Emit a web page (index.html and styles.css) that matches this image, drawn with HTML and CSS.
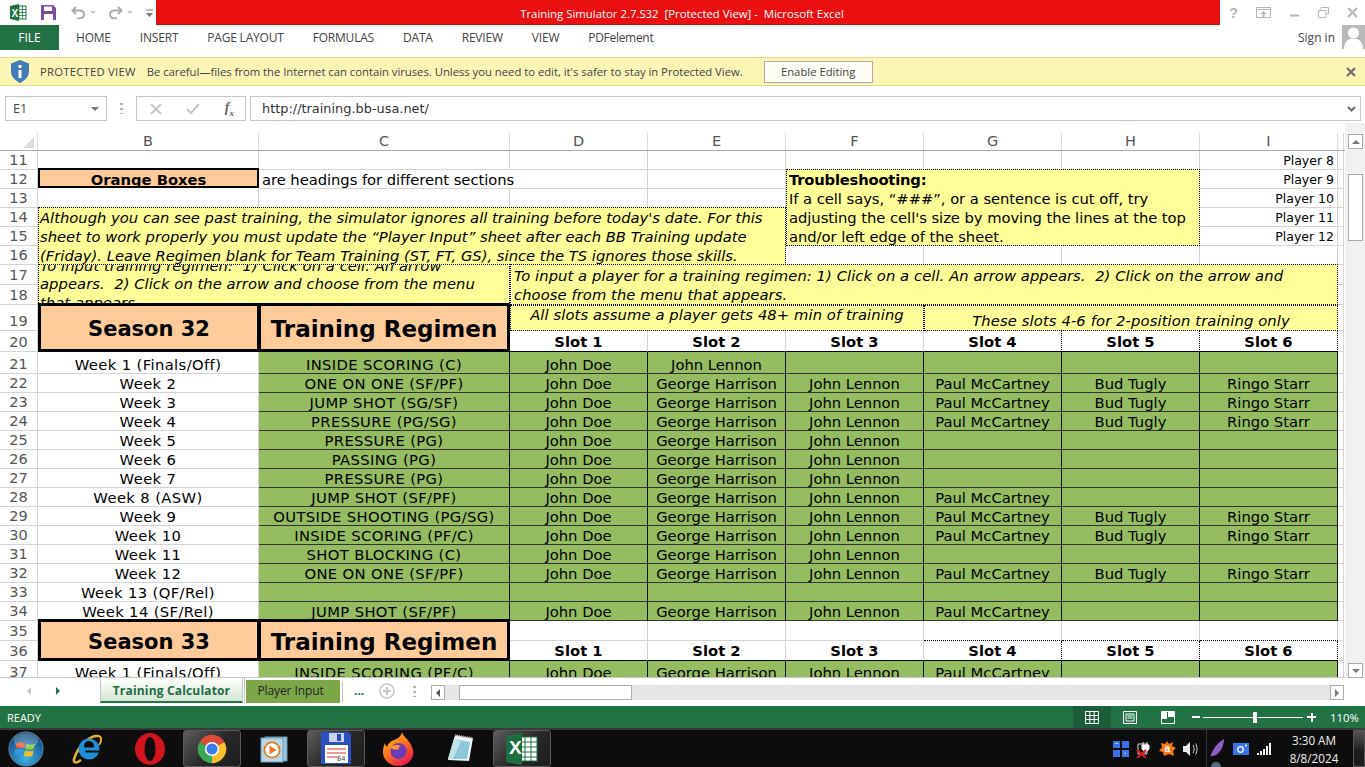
FILE: index.html
```html
<!DOCTYPE html>
<html lang="en">
<head>
    <meta charset="UTF-8">
    <title>Training Simulator 2.7.S32 [Protected View] - Microsoft Excel</title>
    <link rel="stylesheet" href="styles.css">
</head>
<body>

<!-- title bar -->
<div class="titlebar">
    <div class="qat">
        <svg class="qat-xl" width="17" height="17" viewBox="0 0 17 17"><rect x="6" y="2" width="10" height="13" fill="#fff" stroke="#217346"/><path d="M9 2v13M12.500 2v13M6 5.500h10M6 8.500h10M6 11.500h10" stroke="#217346" stroke-width=".8"/><path d="M0 2l9-2v17l-9-2z" fill="#217346"/><text x="1.500" y="12.500" class="xl-letter">X</text></svg>
        <svg class="qat-save" width="15" height="15" viewBox="0 0 15 15"><path d="M0 0h12l3 3v12h-15z" fill="#7e4a9e"/><rect x="3" y="1.500" width="8" height="4.500" fill="#fff"/><rect x="3" y="9" width="9" height="6" fill="#fff"/></svg>
        <svg class="qat-undo" width="15" height="13" viewBox="0 0 15 13"><path d="M5 1L1.500 4.500 5 8M2 4.500h7a4 4 0 0 1 0 8H6" fill="none" stroke="#ababab" stroke-width="2"/></svg>
        <span class="qat-drop"></span>
        <svg class="qat-redo" width="15" height="13" viewBox="0 0 15 13"><path d="M10 1l3.500 3.500L10 8M13 4.500H6a4 4 0 0 0 0 8h3" fill="none" stroke="#ababab" stroke-width="2"/></svg>
        <span class="qat-drop"></span>
        <svg class="qat-more" width="7" height="8" viewBox="0 0 7 8"><path d="M0 1h7" stroke="#777"/><path d="M0 4h7L3.500 8z" fill="#777"/></svg>
    </div>
    <div class="title">Training Simulator 2.7.S32&nbsp; [Protected View] -&nbsp; Microsoft Excel</div>
    <div class="winbtns">
        <span class="help">?</span>
        <svg width="15" height="11" viewBox="0 0 15 11"><rect x=".5" y=".5" width="14" height="10" fill="none" stroke="#b5b5b5"/><path d="M.5 2.500h14" stroke="#b5b5b5"/><path d="M7.500 4l-3 3h2v3h2V7h2z" fill="#b5b5b5"/></svg>
        <svg width="11" height="11" viewBox="0 0 11 11"><path d="M1 8.500h9" stroke="#b5b5b5" stroke-width="2"/></svg>
        <svg width="11" height="11" viewBox="0 0 11 11"><path d="M3 3V.5h7.500V7H8M.5 3.500H8V10.500H.5z" fill="none" stroke="#b5b5b5"/></svg>
        <svg width="11" height="11" viewBox="0 0 11 11"><path d="M1 1l9 9M10 1l-9 9" stroke="#b5b5b5" stroke-width="2"/></svg>
    </div>
</div>

<!-- ribbon tabs -->
<div class="ribbon">
    <div class="file-tab">FILE</div>
    <div class="rtabs">
        <span>HOME</span><span>INSERT</span><span>PAGE LAYOUT</span><span>FORMULAS</span><span>DATA</span><span>REVIEW</span><span>VIEW</span><span class="pdf">PDFelement</span>
    </div>
    <div class="signin">Sign in</div>
    <svg class="avatar" width="23" height="24" viewBox="0 0 23 24"><rect width="23" height="24" fill="#b9b9b9"/><circle cx="11.500" cy="8" r="5.500" fill="#fff"/><path d="M2 24c0-6 3-9 6-10h7c3 1 6 4 6 10z" fill="#fff"/></svg>
</div>

<!-- protected view message -->
<div class="msgbar">
    <svg class="shield" width="20" height="23" viewBox="0 0 20 23"><path d="M10 0l9 3.500v8c0 5-4 9-9 11.500-5-2.500-9-6.500-9-11.500v-8z" fill="#3f7cb8"/><circle cx="10" cy="6.500" r="1.700" fill="#fff"/><path d="M8.500 10h3v8h-3z" fill="#fff"/></svg>
    <span class="msg-head">PROTECTED VIEW</span>
    <span class="msg-text">Be careful—files from the Internet can contain viruses. Unless you need to edit, it's safer to stay in Protected View.</span>
    <button class="enable">Enable Editing</button>
    <svg class="msg-close" width="10" height="10" viewBox="0 0 10 10"><path d="M1 1l8 8M9 1l-8 8" stroke="#6d6d6d" stroke-width="2.200"/></svg>
</div>

<!-- formula bar -->
<div class="fbar">
    <div class="namebox"><span>E1</span><i class="drop"></i></div>
    <div class="fdots"></div>
    <div class="fbtns">
        <svg width="12" height="12" viewBox="0 0 12 12"><path d="M1 1l10 10M11 1L1 11" stroke="#c6c6c6" stroke-width="2"/></svg>
        <svg width="14" height="12" viewBox="0 0 14 12"><path d="M1 6l4 4 8-9" fill="none" stroke="#c6c6c6" stroke-width="2"/></svg>
        <span class="fx">f<sub>x</sub></span>
    </div>
    <div class="finput"><span>http://training.bb-usa.net/</span>
        <svg width="9" height="6" viewBox="0 0 9 6"><path d="M1 1l3.500 3.500L8 1" fill="none" stroke="#6d6d6d" stroke-width="2"/></svg>
    </div>
</div>

<!-- sheet area -->
<div class="sheet-wrap">
    <div class="sheet-main">
        <div class="colheads">
            <div class="corner"><i></i></div>
            <div>B</div><div>C</div><div>D</div><div>E</div><div>F</div><div>G</div><div>H</div><div>I</div><div></div>
        </div>
        <div class="grid">
            <div class="rh">11</div><div class="c"></div><div class="c"></div><div class="c"></div><div class="c"></div><div class="c"></div><div class="c"></div><div class="c"></div><div class="c pl">Player 8</div><div class="c"></div>

            <div class="rh">12</div><div class="c orange-small">Orange Boxes</div><div class="c left span2">are headings for different sections</div><div class="c"></div>
            <div class="c yellow trouble"><div><b>Troubleshooting:</b><br>If a cell says, “###”, or a sentence is cut off, try<br>adjusting the cell's size by moving the lines at the top<br>and/or left edge of the sheet.</div></div>
            <div class="c pl">Player 9</div><div class="c"></div>

            <div class="rh">13</div><div class="c"></div><div class="c"></div><div class="c"></div><div class="c"></div><div class="c pl">Player 10</div><div class="c"></div>

            <div class="rh">14</div>
            <div class="c yellow note"><div>Although you can see past training, the simulator ignores all training before today's date. For this<br>sheet to work properly you must update the “Player Input” sheet after each BB Training update<br>(Friday). Leave Regimen blank for Team Training (ST, FT, GS), since the TS ignores those skills.</div></div>
            <div class="c pl">Player 11</div><div class="c"></div>

            <div class="rh">15</div><div class="c pl">Player 12</div><div class="c"></div>

            <div class="rh">16</div><div class="c"></div><div class="c"></div><div class="c"></div><div class="c"></div><div class="c"></div>

            <div class="rh">17</div>
            <div class="c yellow howto-a"><div>To input training regimen:&nbsp; 1) Click on a cell. An arrow<br>appears.&nbsp; 2) Click on the arrow and choose from the menu<br>that appears.</div></div>
            <div class="c yellow howto-b"><div>To input a player for a training regimen: 1) Click on a cell. An arrow appears.&nbsp; 2) Click on the arrow and<br>choose from the menu that appears.</div></div>
            <div class="c"></div>

            <div class="rh">18</div><div class="c"></div>

            <div class="rh">19</div>
            <div class="c season box-l">Season 32</div>
            <div class="c season box-r">Training Regimen</div>
            <div class="c yellow assume">All slots assume a player gets 48+ min of training</div>
            <div class="c yellow only">These slots 4-6 for 2-position training only</div>
            <div class="c"></div>

            <div class="rh">20</div>
            <div class="c slot">Slot 1</div><div class="c slot">Slot 2</div><div class="c slot">Slot 3</div><div class="c slot dot">Slot 4</div><div class="c slot dot">Slot 5</div><div class="c slot dot">Slot 6</div><div class="c"></div>

            <div class="rh">21</div><div class="c wk">Week 1 (Finals/Off)</div><div class="c g rg">INSIDE SCORING (C)</div><div class="c g">John Doe</div><div class="c g">John Lennon</div><div class="c g"></div><div class="c g"></div><div class="c g"></div><div class="c g"></div><div class="c"></div>
            <div class="rh">22</div><div class="c wk">Week 2</div><div class="c g rg">ONE ON ONE (SF/PF)</div><div class="c g">John Doe</div><div class="c g">George Harrison</div><div class="c g">John Lennon</div><div class="c g">Paul McCartney</div><div class="c g">Bud Tugly</div><div class="c g">Ringo Starr</div><div class="c"></div>
            <div class="rh">23</div><div class="c wk">Week 3</div><div class="c g rg">JUMP SHOT (SG/SF)</div><div class="c g">John Doe</div><div class="c g">George Harrison</div><div class="c g">John Lennon</div><div class="c g">Paul McCartney</div><div class="c g">Bud Tugly</div><div class="c g">Ringo Starr</div><div class="c"></div>
            <div class="rh">24</div><div class="c wk">Week 4</div><div class="c g rg">PRESSURE (PG/SG)</div><div class="c g">John Doe</div><div class="c g">George Harrison</div><div class="c g">John Lennon</div><div class="c g">Paul McCartney</div><div class="c g">Bud Tugly</div><div class="c g">Ringo Starr</div><div class="c"></div>
            <div class="rh">25</div><div class="c wk">Week 5</div><div class="c g rg">PRESSURE (PG)</div><div class="c g">John Doe</div><div class="c g">George Harrison</div><div class="c g">John Lennon</div><div class="c g"></div><div class="c g"></div><div class="c g"></div><div class="c"></div>
            <div class="rh">26</div><div class="c wk">Week 6</div><div class="c g rg">PASSING (PG)</div><div class="c g">John Doe</div><div class="c g">George Harrison</div><div class="c g">John Lennon</div><div class="c g"></div><div class="c g"></div><div class="c g"></div><div class="c"></div>
            <div class="rh">27</div><div class="c wk">Week 7</div><div class="c g rg">PRESSURE (PG)</div><div class="c g">John Doe</div><div class="c g">George Harrison</div><div class="c g">John Lennon</div><div class="c g"></div><div class="c g"></div><div class="c g"></div><div class="c"></div>
            <div class="rh">28</div><div class="c wk">Week 8 (ASW)</div><div class="c g rg">JUMP SHOT (SF/PF)</div><div class="c g">John Doe</div><div class="c g">George Harrison</div><div class="c g">John Lennon</div><div class="c g">Paul McCartney</div><div class="c g"></div><div class="c g"></div><div class="c"></div>
            <div class="rh">29</div><div class="c wk">Week 9</div><div class="c g rg">OUTSIDE SHOOTING (PG/SG)</div><div class="c g">John Doe</div><div class="c g">George Harrison</div><div class="c g">John Lennon</div><div class="c g">Paul McCartney</div><div class="c g">Bud Tugly</div><div class="c g">Ringo Starr</div><div class="c"></div>
            <div class="rh">30</div><div class="c wk">Week 10</div><div class="c g rg">INSIDE SCORING (PF/C)</div><div class="c g">John Doe</div><div class="c g">George Harrison</div><div class="c g">John Lennon</div><div class="c g">Paul McCartney</div><div class="c g">Bud Tugly</div><div class="c g">Ringo Starr</div><div class="c"></div>
            <div class="rh">31</div><div class="c wk">Week 11</div><div class="c g rg">SHOT BLOCKING (C)</div><div class="c g">John Doe</div><div class="c g">George Harrison</div><div class="c g">John Lennon</div><div class="c g"></div><div class="c g"></div><div class="c g"></div><div class="c"></div>
            <div class="rh">32</div><div class="c wk">Week 12</div><div class="c g rg">ONE ON ONE (SF/PF)</div><div class="c g">John Doe</div><div class="c g">George Harrison</div><div class="c g">John Lennon</div><div class="c g">Paul McCartney</div><div class="c g">Bud Tugly</div><div class="c g">Ringo Starr</div><div class="c"></div>
            <div class="rh">33</div><div class="c wk">Week 13 (QF/Rel)</div><div class="c g"></div><div class="c g"></div><div class="c g"></div><div class="c g"></div><div class="c g"></div><div class="c g"></div><div class="c g"></div><div class="c"></div>
            <div class="rh">34</div><div class="c wk">Week 14 (SF/Rel)</div><div class="c g rg">JUMP SHOT (SF/PF)</div><div class="c g">John Doe</div><div class="c g">George Harrison</div><div class="c g">John Lennon</div><div class="c g">Paul McCartney</div><div class="c g"></div><div class="c g"></div><div class="c"></div>

            <div class="rh">35</div>
            <div class="c season box-l">Season 33</div>
            <div class="c season box-r">Training Regimen</div>
            <div class="c"></div><div class="c"></div><div class="c"></div><div class="c dot-b"></div><div class="c dot-b"></div><div class="c dot-b"></div><div class="c"></div>

            <div class="rh">36</div>
            <div class="c slot">Slot 1</div><div class="c slot">Slot 2</div><div class="c slot">Slot 3</div><div class="c slot dot">Slot 4</div><div class="c slot dot">Slot 5</div><div class="c slot dot">Slot 6</div><div class="c"></div>

            <div class="rh">37</div><div class="c wk">Week 1 (Finals/Off)</div><div class="c g rg">INSIDE SCORING (PF/C)</div><div class="c g">John Doe</div><div class="c g">George Harrison</div><div class="c g">John Lennon</div><div class="c g">Paul McCartney</div><div class="c g"></div><div class="c g"></div><div class="c"></div>
        </div>
    </div>
    <div class="vscroll">
        <div class="sb-btn"><i class="up"></i></div>
        <div class="sb-track"><div class="sb-thumb"></div></div>
        <div class="sb-btn"><i class="down"></i></div>
    </div>
</div>

<!-- sheet tabs -->
<div class="tabbar">
    <div class="tabnav"><i class="nav-l"></i><i class="nav-r"></i></div>
    <div class="tab active">Training Calculator</div>
    <div class="tab green">Player Input</div>
    <div class="tabsep"></div>
    <div class="more">...</div>
    <svg class="addsheet" width="16" height="16" viewBox="0 0 16 16"><circle cx="8" cy="8" r="7" fill="none" stroke="#c6c6c6" stroke-width="1.500"/><path d="M8 4v8M4 8h8" stroke="#c6c6c6" stroke-width="2"/></svg>
    <div class="tabdots"></div>
    <div class="hscroll">
        <div class="hs-btn"><i class="hs-left"></i></div>
        <div class="hs-track"><div class="hs-thumb"></div></div>
        <div class="hs-btn"><i class="hs-right"></i></div>
    </div>
</div>

<!-- status bar -->
<div class="status">
    <span class="ready">READY</span>
    <div class="views">
        <div class="view on"><svg width="14" height="13" viewBox="0 0 14 13"><path d="M.5.500h13v12H.5zM.5 4.500h13M.5 8.500h13M4.800.500v12M9.200.500v12" fill="none" stroke="#fff"/></svg></div>
        <div class="view"><svg width="14" height="13" viewBox="0 0 14 13"><path d="M.5.500h13v12H.5z" fill="none" stroke="#fff"/><path d="M3 3h8v7H3z" fill="none" stroke="#fff"/><path d="M4.500 5h5M4.500 7h5" stroke="#fff"/></svg></div>
        <div class="view"><svg width="14" height="13" viewBox="0 0 14 13"><path d="M.5.500h13v12H.5z" fill="none" stroke="#fff"/><path d="M1 1h5v7H1zM7 1h6v5H7z" fill="#fff"/></svg></div>
    </div>
    <div class="zoom-minus"></div>
    <div class="slider"><div class="seg s1"></div><div class="thumb"></div><div class="seg s2"></div></div>
    <div class="zoom-plus"></div>
    <span class="pct">110%</span>
</div>

<!-- windows taskbar -->
<div class="taskbar">
    <div class="orb">
        <svg width="36" height="36" viewBox="0 0 38 38">
            <defs><radialGradient id="orbg" cx=".5" cy=".75" r=".8"><stop offset="0" stop-color="#3fb4e6"/><stop offset=".6" stop-color="#1d6ca6"/><stop offset="1" stop-color="#103a63"/></radialGradient></defs>
            <circle cx="19" cy="19" r="18" fill="url(#orbg)" stroke="#6a8aa5"/>
            <path d="M9 13c3-1.500 6-1.500 9 0l-1.300 5.500c-3-1.200-6-1.200-9 0z" fill="#e8562a"/>
            <path d="M19.500 13.500c3 1.500 6 1.500 9 0l-1.300 5.500c-3 1.300-6 1.300-9 0z" fill="#8fc33a"/>
            <path d="M7.500 20c3-1.200 6-1.200 9 0L15 25.500c-3-1.200-6-1.200-9 0z" fill="#2f9be0"/>
            <path d="M18 20.500c3 1.300 6 1.300 9 0l-1.300 5.500c-3 1.300-6 1.300-9 0z" fill="#f5c02c"/>
            <ellipse cx="19" cy="10" rx="13" ry="8" fill="#fff" opacity=".22"/>
        </svg>
    </div>
    <div class="tb-item">
        <svg width="34" height="34" viewBox="0 0 34 34"><path d="M27 4C20 3 8 12 3 27c-1 5 3 4 7 1" fill="none" stroke="#e5b32b" stroke-width="2.500"/><path d="M27 4c4 0 4 5 1 9" fill="none" stroke="#e5b32b" stroke-width="2"/><circle cx="18" cy="17" r="10.500" fill="#1f8fd8"/><circle cx="18" cy="14" r="5" fill="#0d0d0d"/><path d="M11 15.500h14v3.500H11z" fill="#1f8fd8"/><path d="M13 19h13l-2 6-9 1z" fill="#1f8fd8"/><path d="M14.500 20.500h14v-2h-14z" fill="#0d0d0d"/></svg>
    </div>
    <div class="tb-item">
        <svg width="30" height="32" viewBox="0 0 30 32"><ellipse cx="15" cy="16" rx="15" ry="16" fill="#d3131f"/><ellipse cx="15" cy="16" rx="5.500" ry="12" fill="#0d0d0d"/></svg>
    </div>
    <div class="tb-item tile">
        <svg width="32" height="32" viewBox="0 0 36 36"><path d="M18 18L4.140 10A16 16 0 0 1 31.860 10z" fill="#dd4b39"/><path d="M18 18L4.140 10A16 16 0 0 0 18 34z" fill="#3aa757"/><path d="M18 18L31.860 10A16 16 0 0 1 18 34z" fill="#fbc02d"/><circle cx="18" cy="18" r="8" fill="#fff"/><circle cx="18" cy="18" r="6.300" fill="#3b7de8"/></svg>
    </div>
    <div class="tb-item">
        <svg width="28" height="28" viewBox="0 0 28 28"><rect x="5" y="2" width="22" height="24" fill="#9ec5da" stroke="#6f9ab3"/><rect x="1" y="3" width="22" height="24" fill="#b9d6e5" stroke="#6f9ab3"/><circle cx="12" cy="15" r="8.500" fill="#e8791e"/><circle cx="12" cy="15" r="6.800" fill="#fff"/><path d="M9.500 10.500l7 4.500-7 4.500z" fill="#e8791e"/></svg>
    </div>
    <div class="tb-item tile">
        <svg width="32" height="33" viewBox="0 0 32 33"><path d="M1 0h27l3 3v29H1z" fill="#2b4fc2"/><rect x="9" y="1" width="15" height="9" fill="#c9d2ea"/><rect x="17" y="2" width="4" height="7" fill="#2b4fc2"/><rect x="5" y="13" width="23" height="18" fill="#fff"/><path d="M7 17h19M7 21h19M7 25h10" stroke="#d8333a" stroke-width="1.200"/><text x="17" y="29" class="floppy-num">64</text></svg>
    </div>
    <div class="tb-item">
        <svg width="32" height="34" viewBox="0 0 32 34"><defs><linearGradient id="ffg" x1="0" y1="0" x2=".6" y2="1"><stop offset="0" stop-color="#ffcb2e"/><stop offset=".5" stop-color="#ff7a1c"/><stop offset="1" stop-color="#e8214c"/></linearGradient></defs><path d="M20 0c1 4 4 5 8 11 3 5 4 9 3 12-1 6-7 11-15 11S1 28 1 20c0-4 1-7 2-9 0 2 1 3 2 4 1-4 4-6 7-7 3-1 7-3 8-8z" fill="url(#ffg)"/><circle cx="16.500" cy="19" r="8" fill="#6d3bb8"/><path d="M8 15c3-2 7-3 11-1-3 1-3 3-1 3-4 1-7 1-10-2z" fill="#ff9b2a"/></svg>
    </div>
    <div class="tb-item">
        <svg width="30" height="30" viewBox="0 0 30 30"><path d="M10 1l18 3-4 23-21-1z" fill="#f3f5f5"/><path d="M9 5l16 3-3 17H3z" fill="#8cc8d8"/><path d="M9 5l7 2-8 18H3z" fill="#c0e3ea"/><path d="M10 1l18 3" stroke="#8d8d8d" stroke-width="2" stroke-dasharray="1 1"/></svg>
    </div>
    <div class="tb-item tile">
        <svg width="32" height="32" viewBox="0 0 32 32"><rect x="13" y="4" width="18" height="24" fill="#fff" stroke="#217346"/><path d="M19 4v24M25 4v24M13 9h18M13 14h18M13 19h18M13 24h18" stroke="#217346"/><path d="M0 3l16-3v32L0 29z" fill="#1d6f42"/><text x="3" y="21" class="xl-big">X</text></svg>
    </div>
    <div class="tray">
        <svg width="16" height="16" viewBox="0 0 16 16"><path d="M0 0h7v7H0zM9 0h7v7H9zM0 9h7v7H0zM9 9h7v7H9z" fill="#3b74e8"/><path d="M2 2h3v1H2zM11 13l2-2v2z" fill="#c5d6f8"/></svg>
        <svg width="16" height="18" viewBox="0 0 16 18"><path d="M2 4h9v10H2z" fill="none" stroke="#d8d8d8"/><path d="M7 2v3M11 2v3M6 5h7v4l-2 2H8L6 9zM9.500 11v2" stroke="#fff" fill="#fff"/><path d="M1 10l9 8M10 10l-9 8" stroke="#e3141b" stroke-width="2"/></svg>
        <svg width="17" height="16" viewBox="0 0 17 16"><path d="M8 0l2 3 4-2-1 4 4 2-3 3 1 5-5-2-5 2-1-4-4-1 3-4-1-4 4 1z" fill="#f47a13"/><text x="5.500" y="11" class="avast">a</text></svg>
        <svg width="16" height="14" viewBox="0 0 16 14"><path d="M0 4h3l4-4v14l-4-4H0z" fill="#e9e9e9"/><path d="M10 3c1.500 2 1.500 6 0 8M12.500 1.500c2 3 2 8 0 11" fill="none" stroke="#d5d5d5"/></svg>
        <svg class="feather" width="20" height="37" viewBox="0 0 20 37"><path d="M.5 0v37" stroke="#333"/><path d="M4 28c2-8 7-15 14-19 0 6-3 13-8 16-2 1-4 1-5 1z" fill="#8f5fc7"/><circle cx="10" cy="37" r="5" fill="#5a6a80"/></svg>
        <svg width="16" height="12" viewBox="0 0 16 12"><rect width="16" height="12" fill="#3b74e8"/><circle cx="7.500" cy="6.500" r="2.800" fill="none" stroke="#fff" stroke-width="1.300"/><circle cx="13" cy="2.500" r="1" fill="#fff"/></svg>
        <svg width="16" height="12" viewBox="0 0 16 12"><path d="M1 10h2v2H1zM4 8h2v4H4zM7 6h2v6H7zM10 3h2v9h-2zM13 0h2v12h-2z" fill="#f4f4f4"/></svg>
        <div class="clock">3:30 AM<br>8/8/2024</div>
        <div class="showdesk"></div>
    </div>
</div>

</body>
</html>
```

FILE: styles.css
```css
* {
    box-sizing: border-box;
}
body {
    margin: 0;
    width: 1365px;
    height: 767px;
    overflow: hidden;
    background-color: white;
    font-family: "Open Sans", sans-serif;
    color: #444;
    display: flex;
    flex-direction: column;
}

/* title bar */
.titlebar {
    display: flex;
    height: 25px;
    flex: none;
}
.qat {
    width: 156px;
    display: flex;
    align-items: center;
    padding-left: 10px;
}
.qat-save {
    margin-left: 14px;
}
.qat-undo {
    margin-left: 15px;
}
.qat-redo {
    margin-left: 12px;
}
.qat-more {
    margin-left: 13px;
}
.qat-drop {
    margin-left: 4px;
    border-left: 3px solid transparent;
    border-right: 3px solid transparent;
    border-top: 3px solid #c6c6c6;
}
.xl-letter {
    font: bold 10px "Liberation Sans", sans-serif;
    fill: white;
}
.title {
    flex: 1;
    background-color: #eb1010;
    border-bottom: 1px solid #cc0b0b;
    color: white;
    font-size: 11.37px;
    line-height: 27px;
    text-align: center;
    padding-right: 12px;
}
.winbtns {
    width: 145px;
    display: flex;
    align-items: center;
    padding-left: 9px;
    gap: 18px;
}
.help {
    font: bold 15px "Liberation Sans", sans-serif;
    color: #b5b5b5;
}

/* ribbon */
.ribbon {
    display: flex;
    height: 25px;
    flex: none;
    align-items: center;
    font-size: 12px;
}
.file-tab {
    width: 59px;
    height: 25px;
    background-color: #217346;
    color: white;
    text-align: center;
    line-height: 25px;
}
.rtabs {
    display: flex;
    gap: 29px;
    margin-left: 17px;
    flex: 1;
    letter-spacing: -0.2px;
}
.rtabs .pdf {
    letter-spacing: -0.3px;
}
.signin {
    margin-right: 7px;
}
.avatar {
    margin-top: -1px;
}

/* protected view bar */
.msgbar {
    margin-top: 7px;
    height: 29px;
    flex: none;
    background-color: #fcf6b5;
    border-top: 1px solid #e1da8b;
    border-bottom: 1px solid #e1da8b;
    display: flex;
    align-items: center;
    padding-left: 10px;
    font-size: 11.3px;
}
.msg-head {
    margin-left: 10px;
    letter-spacing: 0.23px;
}
.msg-text {
    margin-left: 11px;
    letter-spacing: -0.02px;
}
.enable {
    margin-left: 21px;
    width: 109px;
    height: 22px;
    background-color: #fdfdf5;
    border: 1px solid #ababab;
    color: #444;
    font: 11.3px "Open Sans", sans-serif;
    padding: 0;
}
.msg-close {
    margin-left: auto;
    margin-right: 9px;
}

/* formula bar */
.fbar {
    height: 37px;
    flex: none;
    display: flex;
    padding: 10px 4px 2px 5px;
}
.namebox {
    width: 102px;
    border: 1px solid #c6c6c6;
    display: flex;
    align-items: center;
    justify-content: space-between;
    padding: 0 7px;
    font: 12.5px "Open Sans", sans-serif;
}
.drop {
    border-left: 4px solid transparent;
    border-right: 4px solid transparent;
    border-top: 4px solid #777;
}
.fdots {
    width: 3px;
    height: 11px;
    margin: 7px 13px 0 13px;
    background: repeating-linear-gradient(#b5b5b5 0 2px, transparent 2px 5px);
}
.fbtns {
    width: 110px;
    border: 1px solid #c6c6c6;
    display: flex;
    align-items: center;
    justify-content: space-between;
    padding: 0 11px 0 13px;
    margin-right: 4px;
}
.fx {
    font: italic bold 14px "Liberation Serif", serif;
    color: #666;
}
.fx sub {
    font-size: 9px;
}
.finput {
    flex: 1;
    border: 1px solid #c6c6c6;
    display: flex;
    align-items: center;
    justify-content: space-between;
    padding: 0 4px 0 11px;
    font: 12.9px "DejaVu Sans", sans-serif;
    color: #333;
}

/* sheet */
.sheet-wrap {
    display: flex;
    height: 555px;
    flex: none;
    overflow: hidden;
}
.sheet-main {
    width: 1345px;
    flex: none;
    overflow: hidden;
    border-bottom: 1px solid #c6c6c6;
}
.colheads {
    margin-top: 10px;
    height: 18px;
    display: grid;
    grid-template-columns: 38px 221px 251px repeat(6, 138px) 6px;
    border-bottom: 1px solid #ababab;
    font: 14.5px "DejaVu Sans", sans-serif;
    color: #555;
    text-align: center;
    line-height: 17px;
}
.colheads > div {
    border-right: 1px solid #d9d9d9;
}
.corner {
    position: relative;
}
.corner i {
    position: absolute;
    right: 3px;
    bottom: 2px;
    border-left: 11px solid transparent;
    border-bottom: 11px solid #dcdcdc;
}
.grid {
    display: grid;
    grid-template-columns: 38px 221px 251px repeat(6, 138px) 6px;
    grid-template-rows: repeat(6, 19px) 20px 20px 26px 21px 22px repeat(13, 19px) 20px 20px 21px;
    font: 14.75px/17px "DejaVu Sans", sans-serif;
    color: black;
}
.rh {
    border-right: 1px solid #d4d4d4;
    border-bottom: 1px solid #d4d4d4;
    color: #555;
    font-size: 14.5px;
    line-height: 18px;
    display: flex;
    align-items: flex-end;
    justify-content: center;
}
.c {
    border-right: 1px solid #d4d4d4;
    border-bottom: 1px solid #d4d4d4;
    display: flex;
    align-items: flex-end;
    justify-content: center;
    overflow: hidden;
    white-space: nowrap;
    min-width: 0;
}
.left {
    justify-content: flex-start;
    padding-left: 3px;
    line-height: 16px;
    letter-spacing: -0.05px;
}
.span2 {
    grid-column: span 2;
}
.pl {
    justify-content: flex-end;
    padding-right: 3px;
    font-size: 12.5px;
    line-height: 16px;
}
.wk,
.rg {
    letter-spacing: 0.38px;
}
.g {
    background-color: #95bc5f;
    border-right: 1px solid #111;
    border-bottom: 1px solid #333;
}
.yellow {
    background-color: #ffff99;
    border: 1px dotted black;
    justify-content: flex-start;
    align-items: center;
    padding-left: 3px;
    line-height: 19px;
}
.trouble {
    grid-column: span 3;
    grid-row: span 4;
    margin-top: -1px;
    padding: 1px 0 0 2px;
    letter-spacing: -0.05px;
}
.trouble b {
    letter-spacing: -0.2px;
}
.note {
    grid-column: span 4;
    grid-row: span 3;
    font-style: italic;
    margin-top: -1px;
    padding-left: 1px;
}
.howto-a {
    grid-column: span 2;
    grid-row: span 2;
    font-style: italic;
    margin-top: -1px;
    padding-left: 1px;
    line-height: 18.5px;
    letter-spacing: 0.05px;
}
.howto-b {
    grid-column: span 6;
    grid-row: span 2;
    font-style: italic;
    margin-top: -1px;
    letter-spacing: 0.065px;
}
.assume {
    grid-column: span 3;
    justify-content: center;
    align-items: flex-start;
    padding: 0;
    font-style: italic;
    line-height: 18px;
    letter-spacing: 0.08px;
}
.only {
    grid-column: span 3;
    justify-content: center;
    align-items: flex-end;
    padding: 0;
    font-style: italic;
    line-height: 18px;
    letter-spacing: 0.12px;
}
.orange-small {
    background-color: #ffcc99;
    border: 2px solid black;
    font-weight: bold;
    margin: -2px 0 1px 0;
    padding-top: 4px;
    line-height: 18px;
    align-items: center;
}
.season {
    grid-row: span 2;
    background-color: #ffcc99;
    border: 3px solid black;
    font-weight: bold;
    align-items: center;
    margin-top: -2px;
    padding-top: 3px;
    line-height: 26px;
}
.box-l {
    border-right-width: 2px;
    font-size: 21px;
}
.box-r {
    border-left-width: 2px;
    font-size: 23px;
}
.slot {
    font-weight: bold;
    line-height: 18px;
    border-bottom: 1px solid black;
}
.dot {
    border-right: 1px dotted black;
}
.dot-b {
    border-bottom: 1px dotted black;
}

/* vertical scrollbar */
.vscroll {
    width: 20px;
    flex: none;
    background-color: #f1f1f1;
    padding: 11px 2px 0 3px;
    display: flex;
    flex-direction: column;
}
.sb-btn {
    height: 15px;
    flex: none;
    background-color: white;
    border: 1px solid #ababab;
    display: flex;
    align-items: center;
    justify-content: center;
}
.sb-track {
    flex: 1;
    padding-top: 25px;
}
.sb-thumb {
    height: 67px;
    background-color: white;
    border: 1px solid #ababab;
}
.up {
    border-left: 4px solid transparent;
    border-right: 4px solid transparent;
    border-bottom: 4px solid #777;
}
.down {
    border-left: 4px solid transparent;
    border-right: 4px solid transparent;
    border-top: 4px solid #777;
}

/* sheet tabs */
.tabbar {
    height: 28px;
    flex: none;
    display: flex;
    align-items: flex-start;
    font-size: 12px;
}
.tabnav {
    width: 100px;
    height: 26px;
    display: flex;
    align-items: center;
    padding-left: 27px;
    gap: 25px;
}
.nav-l {
    border-top: 4px solid transparent;
    border-bottom: 4px solid transparent;
    border-right: 4px solid #c6c6c6;
}
.nav-r {
    border-top: 4px solid transparent;
    border-bottom: 4px solid transparent;
    border-left: 4px solid #217346;
}
.tab {
    height: 25px;
    text-align: center;
    line-height: 25px;
}
.tab.active {
    width: 143px;
    background: linear-gradient(white, #d5e6d2);
    border-left: 1px solid #c6c6c6;
    border-right: 1px solid #c6c6c6;
    border-bottom: 2px solid #217346;
    color: #1f6b45;
    font-weight: bold;
    letter-spacing: 0.17px;
}
.tab.green {
    width: 96px;
    margin-left: 1px;
    padding-right: 4px;
    background-color: #7da647;
    border-left: 1px solid #c6c6c6;
    box-shadow: inset 0 2px 0 white, inset 1px 0 0 white;
    color: #222;
    letter-spacing: -0.1px;
}
.tabsep {
    width: 1px;
    height: 21px;
    margin: 3px 0 0 2px;
    background-color: #c6c6c6;
}
.more {
    margin-left: 11px;
    width: 24px;
    color: #217346;
    font-weight: bold;
    line-height: 26px;
}
.addsheet {
    margin: 5px 0 0 1px;
}
.tabdots {
    width: 3px;
    height: 11px;
    margin: 8px 0 0 18px;
    background: repeating-linear-gradient(#b5b5b5 0 2px, transparent 2px 5px);
}
.hscroll {
    display: flex;
    margin: 7px 0 0 15px;
    height: 15px;
    width: 913px;
}
.hs-btn {
    width: 14px;
    flex: none;
    background-color: white;
    border: 1px solid #ababab;
    display: flex;
    align-items: center;
    justify-content: center;
}
.hs-track {
    flex: 1;
    background-color: #e6e6e6;
    padding-left: 14px;
}
.hs-thumb {
    width: 173px;
    height: 15px;
    background-color: white;
    border: 1px solid #ababab;
}
.hs-left {
    border-top: 4px solid transparent;
    border-bottom: 4px solid transparent;
    border-right: 4px solid #555;
}
.hs-right {
    border-top: 4px solid transparent;
    border-bottom: 4px solid transparent;
    border-left: 4px solid #777;
}

/* status bar */
.status {
    height: 22px;
    flex: none;
    background-color: #217346;
    color: white;
    display: flex;
    align-items: center;
    padding-left: 7px;
    font-size: 11px;
}
.views {
    margin-left: auto;
    display: flex;
}
.view {
    width: 38px;
    height: 22px;
    display: flex;
    align-items: center;
    justify-content: center;
}
.view.on {
    background-color: #1b5e39;
}
.zoom-minus {
    width: 8px;
    height: 2px;
    margin-left: 5px;
    background-color: white;
}
.slider {
    display: flex;
    align-items: center;
    margin-left: 3px;
}
.seg {
    height: 1px;
    background-color: white;
}
.s1 {
    width: 50px;
}
.s2 {
    width: 46px;
}
.thumb {
    width: 4px;
    height: 11px;
    background-color: white;
}
.zoom-plus {
    width: 9px;
    height: 9px;
    margin-left: 4px;
    background: linear-gradient(white, white) center / 9px 2px no-repeat, linear-gradient(white, white) center / 2px 9px no-repeat;
}
.pct {
    margin-left: 14px;
    width: 35px;
    font-size: 11.3px;
}

/* taskbar */
.taskbar {
    height: 39px;
    flex: none;
    background-color: #0d0d0d;
    border-top: 2px solid #3a3a3a;
    display: flex;
    align-items: center;
    gap: 4px;
}
.orb {
    width: 55px;
    padding-left: 8px;
    display: flex;
}
.tb-item {
    width: 58px;
    height: 37px;
    display: flex;
    align-items: center;
    justify-content: center;
}
.tile {
    background: linear-gradient(135deg, #5c5c5c, #272727 55%, #1e1e1e);
    border: 1px solid #5a5a5a;
    border-radius: 3px;
}
.floppy-num {
    font: 7px "DejaVu Sans Mono", monospace;
    fill: #444;
}
.xl-big {
    font: bold 19px "Liberation Sans", sans-serif;
    fill: white;
}
.avast {
    font: bold 10px "Liberation Sans", sans-serif;
    fill: white;
}
.tray {
    margin-left: auto;
    display: flex;
    align-items: center;
    gap: 7px;
    height: 37px;
}
.clock {
    width: 70px;
    color: #f0f0f0;
    font-size: 11.7px;
    line-height: 18px;
    text-align: center;
}
.showdesk {
    width: 12px;
    height: 37px;
    margin-left: -3px;
    background: linear-gradient(#555, #1c1c1c 60%);
    border: 1px solid #555;
}
```
